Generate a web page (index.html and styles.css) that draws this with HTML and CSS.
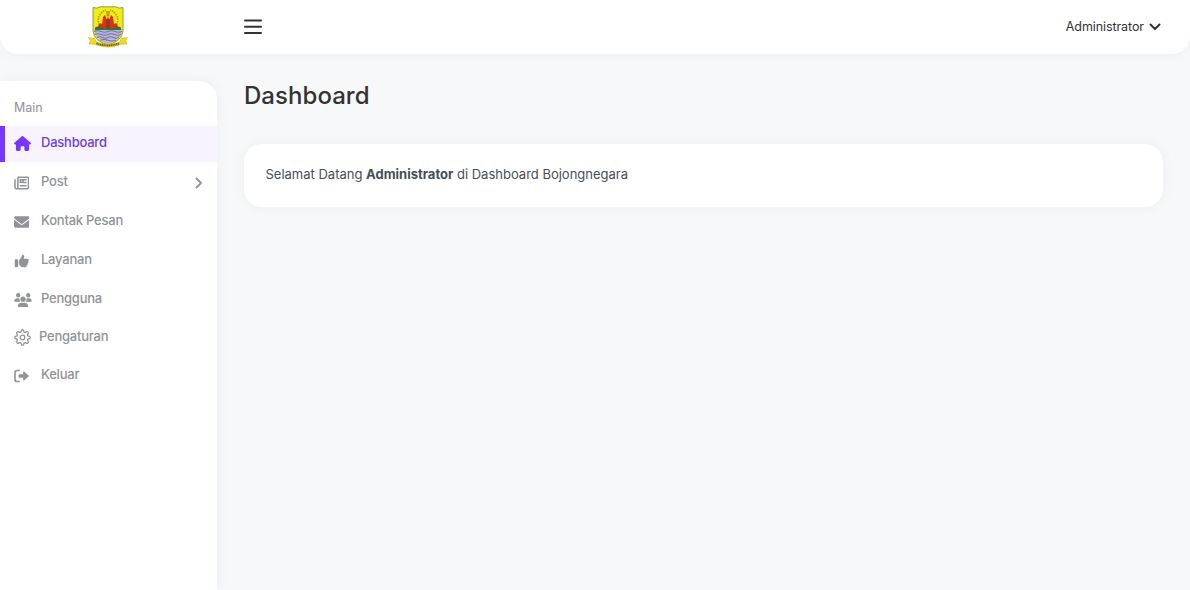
FILE: index.html
```html
<!DOCTYPE html>
<html lang="id">
<head>
<meta charset="utf-8">
<title>Dashboard</title>
<link rel="stylesheet" href="styles.css">
</head>
<body>
<header class="header">
  <a class="brand" href="#" aria-label="Bojongnegara">
    <svg class="crest" viewBox="0 0 40 42">
      <path d="M5 1.500Q9 3 12 .8H28Q31 3 35 1.500V25Q34 35 20 39Q6 35 5 25Z" fill="#f2ec16" stroke="#6d8f2c" stroke-width=".8"/>
      <path d="M6 23H34Q34 33 20 38Q6 33 6 23Z" fill="#b9b5dd"/>
      <path d="M6 25.500q3.500-1.500 7 0t7 0 7 0 7 0M7 28.500q3.200-1.500 6.500 0t6.500 0 6.500 0 6.500 0M9 31.500q2.800-1.500 5.500 0t5.500 0 5.500 0 5.500 0M12 34.300q4-1.500 8 0t8 0" fill="none" stroke="#77749f" stroke-width="1.100"/>
      <path d="M11 19Q8 8 18 4M29 19Q32 8 22 4" fill="none" stroke="#b7a31b" stroke-width="1.800" stroke-dasharray="1.500 1"/>
      <path d="M18 5h4l-.5 5h-3z" fill="#c9a61a"/>
      <path d="M9 22l3-5 2 1 1-7 2-2 2 5 1-5 1 5 2-5 2 2 1 7 2-1 3 5z" fill="#d9301e"/>
      <path d="M18.500 13h3l.7 9h-4.400z" fill="#9b3515"/>
      <path d="M7 21.500q4-2 7 .5h12q3-2.500 7-.5V24H7z" fill="#35722e"/>
      <path d="M.5 31.500L7 32.500 8 36Q20 40.500 32 36l1-3.500 6.500-1-2 3.500 1.500 3-6 .3Q20 44 7 38.300L1 38l1.500-3z" fill="#f4da18" stroke="#c2a51b" stroke-width=".5"/>
      <path d="M8.500 37.300Q20 41.500 31.500 37.300" fill="none" stroke="#725e18" stroke-width="2" stroke-dasharray="1.300 .5"/>
    </svg>
  </a>
  <button class="toggle" aria-label="Menu"><svg viewBox="0 0 18 16"><path d="M1 1.500h16M1 7.800h16M1 14.100h16"/></svg></button>
  <a class="account" href="#"><span>Administrator</span><svg viewBox="0 0 12 8"><path d="M1.500 1.500L6 6l4.500-4.500"/></svg></a>
</header>
<div class="layout">
  <nav class="sidebar">
    <h2 class="menu-title">Main</h2>
    <ul class="menu">
      <li><a class="item active" href="#"><svg class="icon solid home" viewBox="0 0 576 512"><path d="M575.800 255.500c0 18-15 32.100-32 32.100h-32l.7 160.200V472c0 22.100-17.900 40-40 40H392c-22.100 0-40-17.900-40-40v-88c0-17.700-14.300-32-32-32h-64c-17.700 0-32 14.300-32 32v88c0 22.100-17.900 40-40 40h-80c-22.100 0-40-17.900-40-40V287.600H32c-18 0-32-14-32-32.100 0-9 3-17 10-24L266.400 8c7-7 15-8 22-8s15 2 21 7l255.400 224.500c8 7 12 15 11 24z"/></svg><span>Dashboard</span></a></li>
      <li><a class="item" href="#"><svg class="icon line" viewBox="0 0 16 14"><path d="M4 1h9.800q1.200 0 1.200 1.200v9q0 1.800-1.800 1.800H2.700Q1 13 1 11.300V3M4 1v10.300Q4 13 2.700 13M6.500 3.700h2.800v2.600H6.500zM9.500 3.700H13M9.500 6.500H13M6 9.800h7"/></svg><span>Post</span><svg class="arrow" viewBox="0 0 8 12"><path d="M1.500 1.500L6 6l-4.500 4.500"/></svg></a></li>
      <li><a class="item" href="#"><svg class="icon solid" viewBox="0 64 512 384"><path d="M48 64C21.500 64 0 85.500 0 112c0 15.100 7.100 29.300 19.200 38.400l217.600 163.200c11.400 8.500 27 8.500 38.400 0l217.600-163.200c12.100-9.100 19.200-23.300 19.200-38.400 0-26.500-21.500-48-48-48zM0 176v208c0 35.300 28.700 64 64 64h384c35.300 0 64-28.700 64-64V176L294.400 339.200c-22.800 17.100-54 17.100-76.800 0z"/></svg><span>Kontak Pesan</span></a></li>
      <li><a class="item" href="#"><svg class="icon solid" viewBox="0 0 512 512"><path d="M313.400 32.900c26 5.200 42.900 30.500 37.700 56.500l-2.300 11.400c-5.300 26.700-15.100 52.100-28.800 75.200h144c26.500 0 48 21.500 48 48 0 18.500-10.500 34.600-25.900 42.600 10.900 8.800 17.900 22.300 17.900 37.400 0 23.400-16.800 42.900-38.900 47.100 4.400 7.300 6.900 15.800 6.900 24.900 0 21.300-13.900 39.400-33.100 45.600.7 3.300 1.100 6.800 1.100 10.400 0 26.500-21.500 48-48 48h-97.500c-19 0-37.500-5.600-53.300-16.100l-38.500-25.700C176 420.400 160 390.400 160 358.300V247.100c0-29.200 13.300-56.700 36-75l7.400-5.900c26.500-21.200 44.600-51 51.200-84.200l2.300-11.400c5.200-26 30.500-42.900 56.500-37.700zM32 192h64c17.700 0 32 14.300 32 32v224c0 17.700-14.300 32-32 32H32c-17.700 0-32-14.300-32-32V224c0-17.700 14.300-32 32-32z"/></svg><span>Layanan</span></a></li>
      <li><a class="item" href="#"><svg class="icon solid users" viewBox="0 0 640 512"><path d="M144 0a80 80 0 1 1 0 160 80 80 0 1 1 0-160zM512 0a80 80 0 1 1 0 160 80 80 0 1 1 0-160zM0 298.700C0 239.800 47.800 192 106.700 192h42.700c15.900 0 31 3.500 44.600 9.700-1.300 7.200-1.900 14.700-1.900 22.300 0 38.200 16.800 72.500 43.300 96H21.300C9.600 320 0 310.400 0 298.700zM405.300 320c26.600-23.500 43.300-57.800 43.300-96 0-7.600-.7-15-1.900-22.300 13.600-6.300 28.700-9.700 44.600-9.700H534c58.200 0 106 47.800 106 106.700 0 11.800-9.600 21.300-21.300 21.300zM224 224a96 96 0 1 1 192 0 96 96 0 1 1-192 0zM128 485.300C128 411.700 187.700 352 261.300 352h117.400C452.300 352 512 411.700 512 485.300c0 14.700-11.900 26.700-26.700 26.700H154.700c-14.700 0-26.700-11.900-26.700-26.700z"/></svg><span>Pengguna</span></a></li>
      <li><a class="item gear" href="#"><svg class="icon thin" viewBox="0 0 16 16"><circle cx="8" cy="8" r="2.200"/><path d="M6.800 1.800Q7 .7 8 .7t1.200 1.100l.2.800q.3.900 1.200.5l.9-.4q1-.5 1.600.2t.2 1.600l-.4.900q-.4.900.5 1.200l.8.200q1.100.2 1.100 1.200t-1.100 1.200l-.8.200q-.9.300-.5 1.200l.4.900q.5 1-.2 1.600t-1.600.2l-.9-.4q-.9-.4-1.200.5l-.2.800Q9 15.300 8 15.300t-1.200-1.100l-.2-.8q-.3-.9-1.200-.5l-.9.400q-1 .5-1.600-.2t-.2-1.600l.4-.9q.4-.9-.5-1.200l-.8-.2Q.7 9 .7 8t1.100-1.200l.8-.2q.9-.3.5-1.200l-.4-.9q-.5-1 .2-1.600t1.600-.2l.9.400q.9.400 1.200-.5z"/></svg><span>Pengaturan</span></a></li>
      <li><a class="item" href="#"><svg class="icon exit" viewBox="0 0 16 14"><path class="bracket" d="M5.300 1.300H3.200Q1 1.300 1 3.500v7q0 2.200 2.200 2.200h2.100"/><path class="shaft" d="M5.500 5.300h4V3.200q.1-1.300 1.200-.5l4.300 3.700q.7.600 0 1.200l-4.300 3.700q-1.100.8-1.200-.5V8.700h-4Q4.700 8.700 4.700 8V6q0-.7.800-.7z"/></svg><span>Keluar</span></a></li>
    </ul>
  </nav>
  <main class="content">
    <h1 class="title">Dashboard</h1>
    <section class="card"><p class="welcome">Selamat Datang <strong>Administrator</strong> di Dashboard Bojongnegara</p></section>
  </main>
</div>
</body>
</html>
```
FILE: styles.css
```css
* { box-sizing: border-box; }
body { margin: 0; height: 590px; overflow: hidden; display: flex; flex-direction: column; background: #f7f8fa; font-family: Inter, "Liberation Sans", sans-serif; color: #333; }
a { color: inherit; text-decoration: none; }
svg { display: block; flex: none; }
.header { height: 54px; flex: none; display: flex; align-items: center; background: #fff; border-radius: 0 0 18px 18px; box-shadow: 0 0 12px rgba(90, 100, 120, .07); }
.brand { width: 216px; display: flex; justify-content: center; }
.crest { width: 40px; height: 42px; }
.toggle { margin-left: 28px; padding: 0; border: 0; background: none; }
.toggle svg { width: 18px; height: 16px; fill: none; stroke: #333; stroke-width: 2; stroke-linecap: round; }
.account { margin-left: auto; margin-right: 29px; display: flex; align-items: center; gap: 5px; font-size: 12.5px; line-height: 18px; letter-spacing: -.08px; }
.account svg { width: 12px; height: 8px; fill: none; stroke: #333; stroke-width: 2; stroke-linecap: round; stroke-linejoin: round; }
.layout { flex: 1; display: flex; }
.sidebar { width: 217px; flex: none; margin-top: 27px; background: #fff; border-radius: 0 18px 0 0; box-shadow: 0 0 12px rgba(90, 100, 120, .07); }
.menu-title { margin: 0; height: 45px; padding: 18px 14px 0; font-size: 12.5px; line-height: 18px; font-weight: 400; color: #919396; }
.menu { list-style: none; margin: 0; padding: 0; display: flex; flex-direction: column; gap: 3px; }
.item { height: 36px; display: flex; align-items: center; padding: 0 14px 1px 13.5px; color: #919396; font-size: 13px; line-height: 18px; font-weight: 500; letter-spacing: -.23px; }
.item > span { padding-bottom: 3px; }
.item.active { background: #f7f3ff; border-left: 5px solid #7638ff; padding-left: 8.5px; color: #6d3ee0; }
.icon { width: 15.500px; height: 14px; margin-right: 12px; }
.solid { fill: currentColor; }
.home { width: 17px; height: 15px; margin-right: 10.5px; fill: #7638ff; }
.users { width: 18px; height: 14px; margin-right: 9.5px; }
.line { fill: none; stroke: currentColor; stroke-width: 1.6; }
.thin { width: 17px; height: 17px; margin-right: 8.5px; fill: none; stroke: currentColor; stroke-width: 1.2; }
.gear { height: 34px; }
.bracket { fill: none; stroke: currentColor; stroke-width: 1.7; stroke-linecap: round; }
.shaft { fill: currentColor; }
.arrow { width: 8px; height: 12px; margin-left: auto; fill: none; stroke: currentColor; stroke-width: 1.8; stroke-linecap: round; stroke-linejoin: round; }
.content { flex: 1; padding: 25px 27px 0; }
.title { margin: 0; font-size: 24px; line-height: 34px; font-weight: 500; letter-spacing: .05px; }
.card { margin-top: 31px; height: 63px; padding: 20px 21.5px; background: #fff; border-radius: 18px; box-shadow: 0 0 12px rgba(90, 100, 120, .07); }
.welcome { margin: 0; font-size: 13px; line-height: 21px; color: #455056; }
.welcome strong { font-weight: 700; }
```
